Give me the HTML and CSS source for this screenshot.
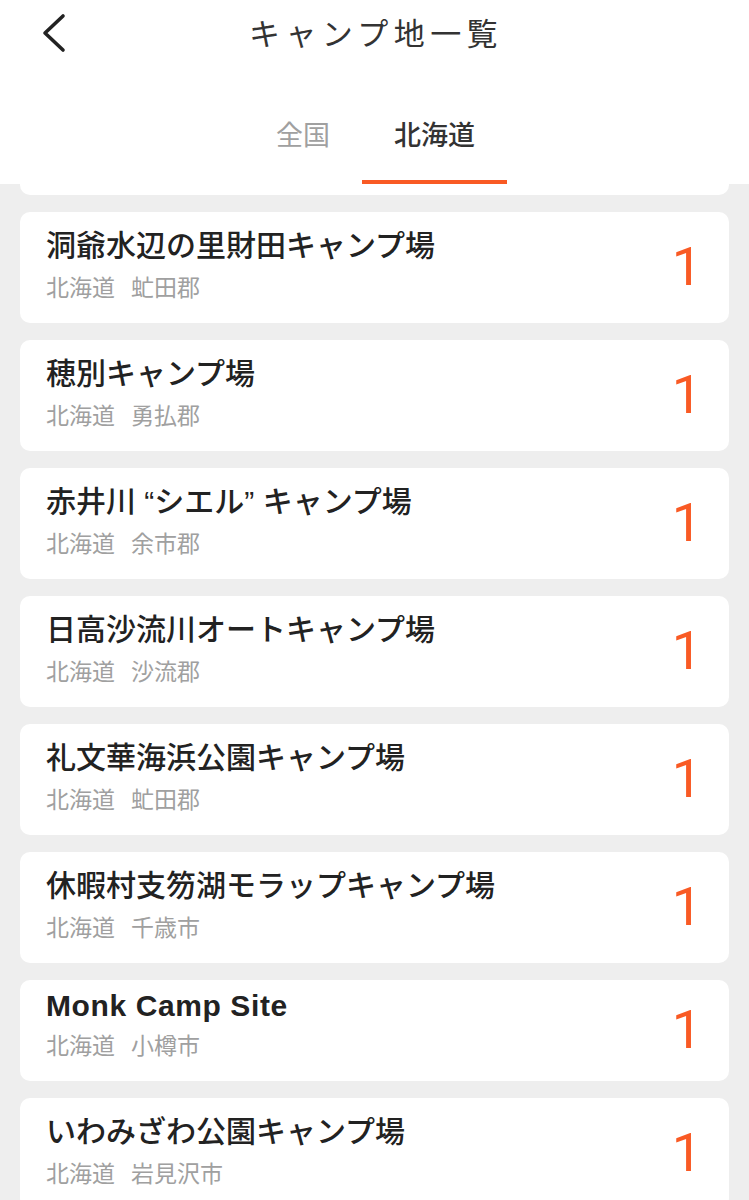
FILE: index.html
```html
<!DOCTYPE html>
<html>
<head>
    <title>キャンプ地一覧</title>
    <link rel="stylesheet" href="styles.css">
</head>
<body>
    <div class="header">
        <div class="top-bar">
            <a class="back-button" href="#">
                <svg width="30" height="40" viewBox="0 0 30 40">
                    <polyline points="22,3 4,20 22,37" fill="none" stroke="#222" stroke-width="3.6" stroke-linecap="round" stroke-linejoin="round"/>
                </svg>
            </a>
            <h1 class="page-title">キャンプ地一覧</h1>
            <span></span>
        </div>
        <div class="tabs">
            <span class="tab">全国</span>
            <span class="tab active">北海道</span>
        </div>
    </div>

    <div class="camp-list">
        <div class="card card-peek"></div>

        <div class="card">
            <div class="card-info">
                <div class="camp-name">洞爺水辺の里財田キャンプ場</div>
                <div class="camp-area">北海道<span>虻田郡</span></div>
            </div>
            <div class="camp-count">1</div>
        </div>

        <div class="card">
            <div class="card-info">
                <div class="camp-name">穂別キャンプ場</div>
                <div class="camp-area">北海道<span>勇払郡</span></div>
            </div>
            <div class="camp-count">1</div>
        </div>

        <div class="card">
            <div class="card-info">
                <div class="camp-name">赤井川 “シエル” キャンプ場</div>
                <div class="camp-area">北海道<span>余市郡</span></div>
            </div>
            <div class="camp-count">1</div>
        </div>

        <div class="card">
            <div class="card-info">
                <div class="camp-name">日高沙流川オートキャンプ場</div>
                <div class="camp-area">北海道<span>沙流郡</span></div>
            </div>
            <div class="camp-count">1</div>
        </div>

        <div class="card">
            <div class="card-info">
                <div class="camp-name">礼文華海浜公園キャンプ場</div>
                <div class="camp-area">北海道<span>虻田郡</span></div>
            </div>
            <div class="camp-count">1</div>
        </div>

        <div class="card">
            <div class="card-info">
                <div class="camp-name">休暇村支笏湖モラップキャンプ場</div>
                <div class="camp-area">北海道<span>千歳市</span></div>
            </div>
            <div class="camp-count">1</div>
        </div>

        <div class="card">
            <div class="card-info">
                <div class="camp-name latin">Monk Camp Site</div>
                <div class="camp-area">北海道<span>小樽市</span></div>
            </div>
            <div class="camp-count">1</div>
        </div>

        <div class="card">
            <div class="card-info">
                <div class="camp-name">いわみざわ公園キャンプ場</div>
                <div class="camp-area">北海道<span>岩見沢市</span></div>
            </div>
            <div class="camp-count">1</div>
        </div>
    </div>
</body>
</html>
```

FILE: styles.css
```css
/* Page */
body {
    margin: 0;
    background-color: #eeeeee;
    font-family: "Liberation Sans", "Noto Sans CJK JP", sans-serif;
    color: #222;
}

/* Header */
.header {
    background-color: #fff;
}

.top-bar {
    display: grid;
    grid-template-columns: 1fr auto 1fr;
    align-items: center;
    height: 62px;
}

.back-button {
    display: flex;
    padding-left: 41px;
    padding-top: 3px;
}

.page-title {
    margin: 0 0 0 3px;
    font-family: "Noto Sans CJK JP", sans-serif;
    font-size: 31px;
    font-weight: normal;
    letter-spacing: 5.4px;
    color: #333;
}

.tabs {
    display: flex;
    justify-content: center;
    padding-top: 52px;
    margin-left: 2px;
}

.tab {
    padding: 0 32px 27px;
    font-family: "Noto Sans CJK JP", sans-serif;
    font-size: 27px;
    color: #a0a0a0;
    border-bottom: 4px solid transparent;
}

.tab.active {
    color: #333;
    font-weight: 500;
    border-bottom-color: #f95a24;
}

/* List */
.camp-list {
    display: flex;
    flex-direction: column;
    gap: 17px;
    padding: 0 20px;
}

.card {
    display: flex;
    align-items: center;
    justify-content: space-between;
    background-color: #fff;
    border-radius: 10px;
    padding: 9px 27px 20px 26px;
}

.card-peek {
    height: 11px;
    padding: 0;
    border-radius: 0 0 10px 10px;
}

.camp-name {
    font-size: 30px;
    font-weight: 500;
    color: #222;
}

.camp-name.latin {
    font-weight: bold;
    letter-spacing: 0.6px;
}

.camp-area {
    margin-top: 4px;
    font-size: 23px;
    color: #a0a0a0;
}

.camp-area span {
    margin-left: 16px;
}

.camp-count {
    font-family: Roboto, "Liberation Sans", sans-serif;
    font-size: 54px;
    font-weight: normal;
    color: #f95a24;
    margin-top: 8px;
}
```
